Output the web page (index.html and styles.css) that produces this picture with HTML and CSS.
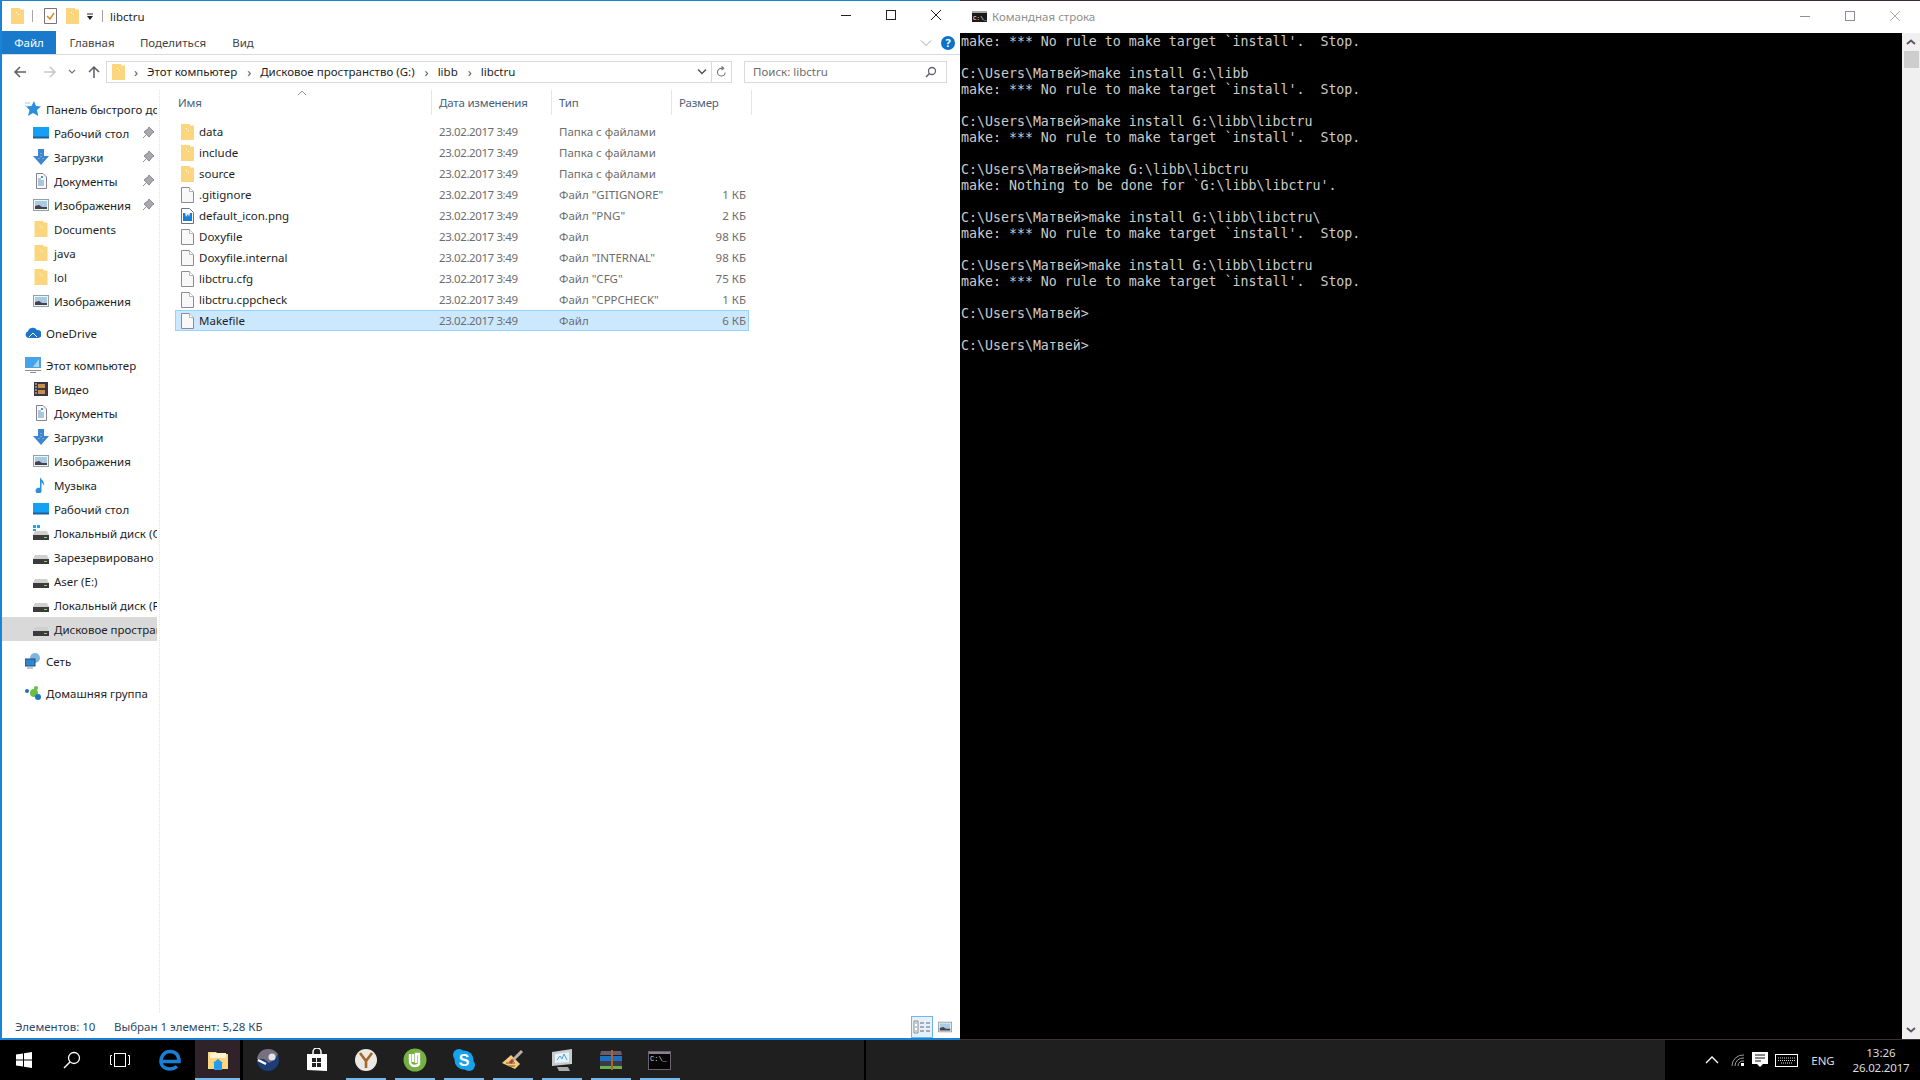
FILE: index.html
```html
<!DOCTYPE html>
<html lang="ru">

<head>
    <meta charset="UTF-8">
    <title>libctru</title>
    <link rel="stylesheet" href="styles.css">
</head>

<body>
    <!-- shared icons -->
    <svg class="sprite" xmlns="http://www.w3.org/2000/svg">
        <symbol id="folder" viewBox="0 0 13 16">
            <path d="M0 0H9V1.5H13V16H0Z" fill="#fbd67f" />
            <path d="M5 4h1v1H5zM7 6h1v1H7z" fill="#fff" />
        </symbol>
        <symbol id="file" viewBox="0 0 13 16">
            <path d="M.5.5H8.5L12.5 4.5V15.5H.5Z" fill="#f8f8f8" stroke="#8d8a96" />
            <path d="M8.5.5V4.5H12.5" fill="#fff" stroke="#b5b3bb" />
        </symbol>
        <symbol id="picfile" viewBox="0 0 13 16">
            <path d="M.5.5H8.5L12.5 4.5V15.5H.5Z" fill="#fff" stroke="#6f7080" />
            <rect x="2" y="5" width="9" height="8" fill="#1a7ed6" />
            <path d="M4 5l1 4 2-3 1 3 1-4z" fill="#e8f4ff" />
        </symbol>
        <symbol id="star" viewBox="0 0 16 16">
            <path d="M9 0l2 5 5 .5-4 3.500 1.300 6L8 12l-5 3 1.500-6L1 5.500 6.500 5z" fill="#2b8fe0" />
            <path d="M0 2h5M0 5h3" stroke="#9bcdf3" />
        </symbol>
        <symbol id="desk" viewBox="0 0 16 16">
            <rect x="0" y="2" width="16" height="11" fill="#15a0f3" />
            <path d="M0 12.500h16" stroke="#1f5f99" stroke-width="2" />
        </symbol>
        <symbol id="down" viewBox="0 0 16 16">
            <path d="M5 0h6v7h5l-8 9-8-9h5z" fill="#3d86cf" />
            <path d="M8 4v1M8 7v1M6 9v1M10 9v1" stroke="#a9cdf0" />
        </symbol>
        <symbol id="docs" viewBox="0 0 16 16">
            <path d="M3.500.5H10L13.500 4V15.500H3.500Z" fill="#fbfbfb" stroke="#85828e" />
            <path d="M5 6h3M5 8h6M5 10h6M5 12h6" stroke="#5a8fbf" />
            <path d="M8 3h2v2H8z" fill="#3f8fd5" />
        </symbol>
        <symbol id="pics" viewBox="0 0 16 16">
            <rect x=".5" y="2.500" width="15" height="11" fill="#eef3f5" stroke="#90a2a0" />
            <rect x="2" y="4" width="12" height="8" fill="#a9cce6" />
            <path d="M2 12V9l4-1 3 2 5 0v2z" fill="#4a3f4c" />
        </symbol>
        <symbol id="pin" viewBox="0 0 16 16">
            <path d="M9 2l5 5-2 1-2 3-1 1-5-5 1-1 3-2zM6 10l-3 3" fill="#a9a9ad" stroke="#8a8a90" />
        </symbol>
        <symbol id="cloud" viewBox="0 0 16 16">
            <path d="M4 13a3.500 3.500 0 0 1-1-6.800A5 5 0 0 1 12 5a3.500 3.500 0 0 1 1 8z" fill="#1d74c6" />
            <path d="M4 12l4-4 4 4" stroke="#fff" fill="none" />
        </symbol>
        <symbol id="comp" viewBox="0 0 16 16">
            <rect x="0" y="0" width="16" height="11" fill="#47a3e8" />
            <path d="M8 10l6-8v8z" fill="#a7d4f3" />
            <path d="M0 13.500h16M5 15.500h6" stroke="#8b8b92" />
        </symbol>
        <symbol id="film" viewBox="0 0 16 16">
            <rect x="1" y="1" width="14" height="14" fill="#3a3540" />
            <path d="M5 3h7v4H5zM5 9h7v4H5z" fill="#c78f4f" />
            <path d="M2 3h2M2 6h2M2 9h2M2 12h2" stroke="#ddd" />
        </symbol>
        <symbol id="music" viewBox="0 0 16 16">
            <path d="M7 0c1 3 5 4 4 9-.3-2-1.500-3-2.500-3.500V13a3 3 0 1 1-1.500-2z" fill="#2a90e0" />
        </symbol>
        <symbol id="disk" viewBox="0 0 16 16">
            <path d="M2 6h12l2 4v5H0v-5z" fill="#cfd0ce" />
            <rect x="0" y="10" width="16" height="5" fill="#3c3a3e" />
            <rect x="11" y="12" width="3" height="1" fill="#86d36a" />
        </symbol>
        <symbol id="sysdisk" viewBox="0 0 16 16">
            <use href="#disk" />
            <path d="M0 0h3v3H0zM4 0h3v3H4zM0 4h3v2H0z" fill="#21a1f1" />
        </symbol>
        <symbol id="net" viewBox="0 0 16 16">
            <circle cx="10" cy="5" r="5" fill="#7fb4dc" />
            <rect x="0" y="6" width="10" height="7" fill="#2f86cf" stroke="#1d4f7c" />
            <path d="M2 15h6" stroke="#8b8b92" />
        </symbol>
        <symbol id="home" viewBox="0 0 16 16">
            <circle cx="2" cy="6" r="2" fill="#1d6fb8" />
            <circle cx="11" cy="3" r="2" fill="#6dbb45" />
            <circle cx="9" cy="8" r="4" fill="#6dbb45" />
            <circle cx="13" cy="12" r="3" fill="#1d74c6" />
        </symbol>
    </svg>

    <div class="desktop">
        <main class="explorer">
            <div class="titlebar">
                <svg class="qa-icon"><use href="#folder" /></svg>
                <span class="qa-sep"></span>
                <svg class="qa-check" viewBox="0 0 13 16">
                    <path d="M.5.5H12.500V15.500H.5Z" fill="#fff" stroke="#77727e" />
                    <path d="M3 8l3 3 4-6" fill="none" stroke="#d98a2b" stroke-width="1.500" />
                </svg>
                <svg class="qa-icon"><use href="#folder" /></svg>
                <svg class="qa-drop" viewBox="0 0 8 8">
                    <path d="M1 1h6" stroke="#222" />
                    <path d="M1 3h6L4 7z" fill="#222" />
                </svg>
                <span class="qa-sep"></span>
                <span class="win-title">libctru</span>
                <div class="win-btns">
                    <svg class="win-btn" viewBox="0 0 10 10"><path d="M0 5.500h10" stroke="#222" /></svg>
                    <svg class="win-btn" viewBox="0 0 10 10"><rect x=".5" y=".5" width="9" height="9" fill="none" stroke="#222" /></svg>
                    <svg class="win-btn" viewBox="0 0 10 10"><path d="M0 0l10 10M10 0L0 10" stroke="#222" /></svg>
                </div>
            </div>

            <div class="ribbon">
                <a class="tab tab-file">Файл</a>
                <a class="tab tab-home">Главная</a>
                <a class="tab tab-share">Поделиться</a>
                <a class="tab tab-view">Вид</a>
                <svg class="rib-chev" viewBox="0 0 12 8"><path d="M1 1.500l5 5 5-5" fill="none" stroke="#a5a5a8" /></svg>
                <span class="help">?</span>
            </div>

            <div class="addr-row">
                <svg class="nav-btn nav-back" viewBox="0 0 14 14"><path d="M13 7H2M7 2L2 7l5 5" fill="none" stroke="#5f5f66" stroke-width="1.500" /></svg>
                <svg class="nav-btn nav-fwd" viewBox="0 0 14 14"><path d="M1 7h11M7 2l5 5-5 5" fill="none" stroke="#c6c6c8" stroke-width="1.500" /></svg>
                <svg class="nav-drop" viewBox="0 0 8 6"><path d="M1 1l3 3 3-3" fill="none" stroke="#77727e" stroke-width="1.200" /></svg>
                <svg class="nav-btn nav-up" viewBox="0 0 14 14"><path d="M7 13V2M2 7l5-5 5 5" fill="none" stroke="#5f5a66" stroke-width="1.500" /></svg>
                <div class="addr-box">
                    <svg class="crumb-icon"><use href="#folder" /></svg>
                    <span class="crumb-sep">›</span>
                    <span class="crumb">Этот компьютер</span>
                    <span class="crumb-sep">›</span>
                    <span class="crumb">Дисковое пространство (G:)</span>
                    <span class="crumb-sep">›</span>
                    <span class="crumb">libb</span>
                    <span class="crumb-sep">›</span>
                    <span class="crumb">libctru</span>
                    <svg class="addr-chev" viewBox="0 0 10 8"><path d="M1 1.500l4 4 4-4" fill="none" stroke="#55505a" stroke-width="1.500" /></svg>
                    <svg class="addr-refresh" viewBox="0 0 12 12"><path d="M10 6.500A4.200 4.200 0 1 1 6 2h2M6 0l2.500 2L6 4" fill="none" stroke="#77727e" stroke-width="1.200" /></svg>
                </div>
                <div class="search-box">
                    <span>Поиск: libctru</span>
                    <svg class="search-icon" viewBox="0 0 12 12"><circle cx="7" cy="5" r="3.500" fill="none" stroke="#66616c" stroke-width="1.300" /><path d="M4.500 7.500L1 11" stroke="#66616c" stroke-width="1.600" /></svg>
                </div>
            </div>

            <div class="panes">
                <nav class="navpane">
                    <div class="nav-group">
                        <div class="nav-row top"><svg class="ico"><use href="#star" /></svg><span>Панель быстрого доступа</span></div>
                        <div class="nav-row"><svg class="ico"><use href="#desk" /></svg><span>Рабочий стол</span><svg class="pin"><use href="#pin" /></svg></div>
                        <div class="nav-row"><svg class="ico"><use href="#down" /></svg><span>Загрузки</span><svg class="pin"><use href="#pin" /></svg></div>
                        <div class="nav-row"><svg class="ico"><use href="#docs" /></svg><span>Документы</span><svg class="pin"><use href="#pin" /></svg></div>
                        <div class="nav-row"><svg class="ico"><use href="#pics" /></svg><span>Изображения</span><svg class="pin"><use href="#pin" /></svg></div>
                        <div class="nav-row"><svg class="ico"><use href="#folder" /></svg><span>Documents</span></div>
                        <div class="nav-row"><svg class="ico"><use href="#folder" /></svg><span>java</span></div>
                        <div class="nav-row"><svg class="ico"><use href="#folder" /></svg><span>lol</span></div>
                        <div class="nav-row"><svg class="ico"><use href="#pics" /></svg><span>Изображения</span></div>
                    </div>
                    <div class="nav-group">
                        <div class="nav-row top"><svg class="ico"><use href="#cloud" /></svg><span>OneDrive</span></div>
                    </div>
                    <div class="nav-group">
                        <div class="nav-row top"><svg class="ico"><use href="#comp" /></svg><span>Этот компьютер</span></div>
                        <div class="nav-row"><svg class="ico"><use href="#film" /></svg><span>Видео</span></div>
                        <div class="nav-row"><svg class="ico"><use href="#docs" /></svg><span>Документы</span></div>
                        <div class="nav-row"><svg class="ico"><use href="#down" /></svg><span>Загрузки</span></div>
                        <div class="nav-row"><svg class="ico"><use href="#pics" /></svg><span>Изображения</span></div>
                        <div class="nav-row"><svg class="ico"><use href="#music" /></svg><span>Музыка</span></div>
                        <div class="nav-row"><svg class="ico"><use href="#desk" /></svg><span>Рабочий стол</span></div>
                        <div class="nav-row"><svg class="ico"><use href="#sysdisk" /></svg><span>Локальный диск (C:)</span></div>
                        <div class="nav-row"><svg class="ico"><use href="#disk" /></svg><span>Зарезервировано системой</span></div>
                        <div class="nav-row"><svg class="ico"><use href="#disk" /></svg><span>Aser (E:)</span></div>
                        <div class="nav-row"><svg class="ico"><use href="#disk" /></svg><span>Локальный диск (F:)</span></div>
                        <div class="nav-row current"><svg class="ico"><use href="#disk" /></svg><span>Дисковое пространство</span></div>
                    </div>
                    <div class="nav-group">
                        <div class="nav-row top"><svg class="ico"><use href="#net" /></svg><span>Сеть</span></div>
                    </div>
                    <div class="nav-group">
                        <div class="nav-row top"><svg class="ico"><use href="#home" /></svg><span>Домашняя группа</span></div>
                    </div>
                </nav>

                <section class="files">
                    <div class="file-head">
                        <svg class="sort-caret" viewBox="0 0 10 6"><path d="M1 5l4-4 4 4" fill="none" stroke="#9a9a9e" /></svg>
                        <div>Имя</div>
                        <div>Дата изменения</div>
                        <div>Тип</div>
                        <div>Размер</div>
                    </div>
                    <div class="file-row"><div class="fname"><svg class="fico"><use href="#folder" /></svg>data</div><div class="fdate">23.02.2017 3:49</div><div>Папка с файлами</div><div class="fsize"></div></div>
                    <div class="file-row"><div class="fname"><svg class="fico"><use href="#folder" /></svg>include</div><div class="fdate">23.02.2017 3:49</div><div>Папка с файлами</div><div class="fsize"></div></div>
                    <div class="file-row"><div class="fname"><svg class="fico"><use href="#folder" /></svg>source</div><div class="fdate">23.02.2017 3:49</div><div>Папка с файлами</div><div class="fsize"></div></div>
                    <div class="file-row"><div class="fname"><svg class="fico"><use href="#file" /></svg>.gitignore</div><div class="fdate">23.02.2017 3:49</div><div>Файл "GITIGNORE"</div><div class="fsize">1 КБ</div></div>
                    <div class="file-row"><div class="fname"><svg class="fico"><use href="#picfile" /></svg>default_icon.png</div><div class="fdate">23.02.2017 3:49</div><div>Файл "PNG"</div><div class="fsize">2 КБ</div></div>
                    <div class="file-row"><div class="fname"><svg class="fico"><use href="#file" /></svg>Doxyfile</div><div class="fdate">23.02.2017 3:49</div><div>Файл</div><div class="fsize">98 КБ</div></div>
                    <div class="file-row"><div class="fname"><svg class="fico"><use href="#file" /></svg>Doxyfile.internal</div><div class="fdate">23.02.2017 3:49</div><div>Файл "INTERNAL"</div><div class="fsize">98 КБ</div></div>
                    <div class="file-row"><div class="fname"><svg class="fico"><use href="#file" /></svg>libctru.cfg</div><div class="fdate">23.02.2017 3:49</div><div>Файл "CFG"</div><div class="fsize">75 КБ</div></div>
                    <div class="file-row"><div class="fname"><svg class="fico"><use href="#file" /></svg>libctru.cppcheck</div><div class="fdate">23.02.2017 3:49</div><div>Файл "CPPCHECK"</div><div class="fsize">1 КБ</div></div>
                    <div class="file-row selected"><div class="fname"><svg class="fico"><use href="#file" /></svg>Makefile</div><div class="fdate">23.02.2017 3:49</div><div>Файл</div><div class="fsize">6 КБ</div></div>
                </section>
            </div>

            <div class="statusbar">
                <span class="st-count">Элементов: 10</span>
                <span class="st-sel">Выбран 1 элемент: 5,28 КБ</span>
                <div class="view-btns">
                    <span class="view-btn active">
                        <svg viewBox="0 0 18 16" width="18" height="16">
                            <path d="M1 2h4v12H1z" fill="#fff" stroke="#8a8a8a" />
                            <path d="M2.500 3.500h1v1h-1zM2.500 7.500h1v1h-1zM2.500 11.500h1v1h-1z" fill="#333" />
                            <path d="M7 4h4M13 4h4M7 8h4M13 8h4M7 12h4M13 12h4" stroke="#66607a" />
                        </svg>
                    </span>
                    <span class="view-btn">
                        <svg width="14" height="14"><use href="#pics" /></svg>
                    </span>
                </div>
            </div>
        </main>

        <section class="console">
            <div class="con-title">
                <svg class="con-icon" viewBox="0 0 15 11">
                    <rect width="15" height="11" fill="#1a1a1a" />
                    <rect y="0" width="15" height="2" fill="#aaa" />
                    <text x="1" y="9" class="con-icon-text">C:\_</text>
                </svg>
                <span class="con-name">Командная строка</span>
                <div class="win-btns con-btns">
                    <svg class="win-btn" viewBox="0 0 10 10"><path d="M0 5.500h10" stroke="#9a8a9a" /></svg>
                    <svg class="win-btn" viewBox="0 0 10 10"><rect x=".5" y=".5" width="9" height="9" fill="none" stroke="#9a8a9a" /></svg>
                    <svg class="win-btn" viewBox="0 0 10 10"><path d="M0 0l10 10M10 0L0 10" stroke="#a3b0a3" /></svg>
                </div>
            </div>
            <div class="con-main">
<pre class="con-text">make: *** No rule to make target `install'.  Stop.

C:\Users\Матвей&gt;make install G:\libb
make: *** No rule to make target `install'.  Stop.

C:\Users\Матвей&gt;make install G:\libb\libctru
make: *** No rule to make target `install'.  Stop.

C:\Users\Матвей&gt;make G:\libb\libctru
make: Nothing to be done for `G:\libb\libctru'.

C:\Users\Матвей&gt;make install G:\libb\libctru\
make: *** No rule to make target `install'.  Stop.

C:\Users\Матвей&gt;make install G:\libb\libctru
make: *** No rule to make target `install'.  Stop.

C:\Users\Матвей&gt;

C:\Users\Матвей&gt;</pre>
                <div class="con-scroll">
                    <svg class="sc-arrow" viewBox="0 0 10 6"><path d="M1 5l4-3.500L9 5" fill="none" stroke="#5f5668" stroke-width="2" /></svg>
                    <div class="sc-thumb"></div>
                    <svg class="sc-arrow sc-down" viewBox="0 0 10 6"><path d="M1 1l4 3.500L9 1" fill="none" stroke="#5f5668" stroke-width="2" /></svg>
                </div>
            </div>
        </section>
    </div>

    <footer class="taskbar">
        <div class="tb-left">
            <span class="tb-cell tb-start">
                <svg width="16" height="16" viewBox="0 0 16 16"><path d="M0 2.500l7-1v6H0zM8 1.300L16 0v7.500H8zM0 8.500h7v6l-7-1zM8 8.500h8V16l-8-1.300z" fill="#fff" /></svg>
            </span>
            <span class="tb-cell tb-search">
                <svg width="18" height="18" viewBox="0 0 18 18"><circle cx="11" cy="7" r="5.500" fill="none" stroke="#fff" stroke-width="1.300" /><path d="M7 11l-6 6" stroke="#fff" stroke-width="1.500" /></svg>
            </span>
            <span class="tb-cell tb-tasks">
                <svg width="20" height="14" viewBox="0 0 20 14"><rect x="4.500" y=".5" width="11" height="13" fill="none" stroke="#fff" /><path d="M2 2.500H.5v9H2M18 2.500h1.500v9H18" fill="none" stroke="#fff" /></svg>
            </span>
            <span class="tb-cell tb-edge">
                <svg width="22" height="22" viewBox="0 0 22 22"><path d="M3 12.500H20C20 6 16.500 2.500 11 2.500S2 7 2 12c0 5 4 8 9 8 3 0 5-.8 7-2.500" fill="none" stroke="#1a7fd4" stroke-width="3.600" /></svg>
            </span>
        </div>
        <span class="tb-cell tb-active">
            <svg width="22" height="19" viewBox="0 0 22 19">
                <path d="M1 1h8l2 2h10v15H1z" fill="#fbd67f" />
                <path d="M3 2h16v5H3z" fill="#fdf3d0" />
                <path d="M6 12l5-4 5 4h-1v7H7v-7z" fill="#2a9bea" />
            </svg>
        </span>
        <div class="tb-apps">
            <span class="tb-app">
                <svg width="22" height="22" viewBox="0 0 22 22">
                    <circle cx="11" cy="11" r="11" fill="#1c3d78" />
                    <path d="M0 10h7l5 4 6-4 3-5C18 1 14 0 11 0 5 0 1 4 0 10z" fill="#7a6f7d" />
                    <circle cx="15" cy="8" r="3.500" fill="#dfe3ea" />
                    <path d="M1 11l8 4" stroke="#fff" stroke-width="2.500" />
                </svg>
            </span>
            <span class="tb-app">
                <svg width="22" height="24" viewBox="0 0 22 24">
                    <path d="M7 7V4a4 4 0 0 1 8 0v3" fill="none" stroke="#fff" stroke-width="1.500" />
                    <path d="M1 6h20v17l-20-1z" fill="#fff" />
                    <path d="M6 10h4v4H6zM11 10h4v4h-4zM6 15h4v4H6zM11 15h4v4h-4z" fill="#222" />
                </svg>
            </span>
            <span class="tb-app on">
                <svg width="24" height="24" viewBox="0 0 24 24">
                    <circle cx="12" cy="12" r="11" fill="#ece9e4" />
                    <path d="M6 5l6 8 6-8M12 13v7" fill="none" stroke="#a5662c" stroke-width="2.600" />
                </svg>
            </span>
            <span class="tb-app on">
                <svg width="24" height="24" viewBox="0 0 24 24">
                    <circle cx="12" cy="12" r="11.500" fill="#76b043" />
                    <path d="M7 6v8c0 3 3 4 5 4 1.500 0 3-.5 4-2V6h-3v9M10 6v8" fill="none" stroke="#fff" stroke-width="2.400" />
                </svg>
            </span>
            <span class="tb-app on">
                <svg width="24" height="24" viewBox="0 0 24 24">
                    <circle cx="7" cy="7" r="6" fill="#15a3ee" />
                    <circle cx="17" cy="17" r="6" fill="#15a3ee" />
                    <circle cx="12" cy="12" r="9.500" fill="#15a3ee" />
                    <text x="12" y="18" class="skype-s">S</text>
                </svg>
            </span>
            <span class="tb-app on">
                <svg width="22" height="22" viewBox="0 0 22 22">
                    <path d="M0 14l9-8 9 9-5 5z" fill="#f2cd7e" />
                    <path d="M4 14h9M6 17h7" stroke="#7a5a2a" />
                    <path d="M9 13L20 2" stroke="#b8b2a6" stroke-width="3" />
                    <path d="M8 14l3-3" stroke="#c0392b" stroke-width="3" />
                </svg>
            </span>
            <span class="tb-app on">
                <svg width="24" height="24" viewBox="0 0 24 24">
                    <path d="M2 4l20-3v15L2 18z" fill="#c9cccc" />
                    <path d="M5 6l14-2v10L5 15z" fill="#e6f3fa" />
                    <path d="M7 12l3-4 2 3 2-5 3 6" fill="none" stroke="#4aa0dd" />
                    <path d="M7 19h11l2 4H9z" fill="#a9abab" />
                </svg>
            </span>
            <span class="tb-app on">
                <svg width="24" height="22" viewBox="0 0 24 22">
                    <path d="M2 2h20l1 4H1z" fill="#6a5a72" />
                    <path d="M1 7h22v5H1z" fill="#1f6fc0" />
                    <path d="M1 12h22v5H1z" fill="#3a3a46" />
                    <path d="M1 17h22v3H1z" fill="#69b04a" />
                    <path d="M13 1v20" stroke="#a9662a" stroke-width="2" />
                </svg>
            </span>
            <span class="tb-app on">
                <svg width="23" height="19" viewBox="0 0 23 19">
                    <rect x=".5" y=".5" width="22" height="18" fill="#050505" stroke="#6d6070" />
                    <rect x="1" y="1" width="21" height="2" fill="#8c8090" />
                    <text x="2" y="10" class="cmd-text">C:\_</text>
                </svg>
            </span>
        </div>
        <div class="tb-div"></div>
        <div class="tb-empty"></div>
        <div class="tray">
            <svg class="tr-arrow" viewBox="0 0 14 8"><path d="M1 7l6-6 6 6" fill="none" stroke="#fff" stroke-width="1.300" /></svg>
            <svg class="tr-wifi" viewBox="0 0 14 14"><path d="M1 13A11 11 0 0 1 13 2M4 13a8 8 0 0 1 9-8M7 13a5 5 0 0 1 6-5" fill="none" stroke="#9d9d9d" /><path d="M10 10h3v3h-3z" fill="#fff" /></svg>
            <svg class="tr-chat" viewBox="0 0 16 16"><path d="M0 0h16v12h-5l-3 3-3-3H0z" fill="#fff" /><path d="M3 3h10M3 6h10M3 9h6" stroke="#111" /></svg>
            <svg class="tr-kb" viewBox="0 0 23 13"><rect x=".5" y=".5" width="22" height="12" fill="none" stroke="#fff" /><path d="M3 4h17M3 6.500h17M6 9h11" stroke="#ddd" stroke-dasharray="1 1" /></svg>
            <span class="tr-lang">ENG</span>
            <div class="tr-clock">
                <span>13:26</span>
                <span class="tr-date">26.02.2017</span>
            </div>
        </div>
    </footer>
</body>

</html>
```

FILE: styles.css
```css
* {
    box-sizing: border-box;
}

html,
body {
    margin: 0;
    padding: 0;
}

body {
    width: 1920px;
    height: 1080px;
    overflow: hidden;
    display: flex;
    flex-direction: column;
    font-family: "Noto Sans", "Open Sans", sans-serif;
    font-size: 11.5px;
    color: #1e1e1e;
    background-color: #000;
}

.sprite {
    display: none;
}

.desktop {
    display: flex;
    height: 1040px;
}

/* explorer window */

.explorer {
    width: 960px;
    display: flex;
    flex-direction: column;
    background-color: #fff;
    border: 1px solid #1883d7;
    border-left-width: 2px;
    border-right: none;
    border-bottom-width: 2px;
}

.titlebar {
    height: 30px;
    display: flex;
    align-items: center;
    padding-left: 9px;
    flex: none;
}

.qa-icon {
    width: 13px;
    height: 16px;
}

.qa-sep {
    width: 1px;
    height: 12px;
    background-color: #a5a5a5;
    margin: 0 8px;
}

.qa-check {
    width: 13px;
    height: 16px;
    margin: 0 9px 0 3px;
}

.qa-drop {
    width: 8px;
    height: 8px;
    margin: 2px 0 0 7px;
}

.win-title {
    margin-left: -1px;
    color: #1e1e1e;
}

.win-btns {
    margin-left: auto;
    display: flex;
    align-items: center;
    gap: 35px;
    padding: 0 19px 2px 0;
}

.win-btn {
    width: 10px;
    height: 10px;
    display: block;
}

.ribbon {
    height: 24px;
    display: flex;
    align-items: center;
    border-bottom: 1px solid #dadbdc;
    flex: none;
    color: #444;
}

.tab {
    display: block;
    text-align: center;
}

.tab-file {
    width: 54px;
    height: 23px;
    line-height: 23px;
    background-color: #1979ca;
    color: #fff;
}

.tab-home {
    width: 70px;
    margin-left: 1px;
}

.tab-share {
    width: 92px;
}

.tab-view {
    width: 46px;
    margin-left: 1px;
}

.rib-chev {
    width: 12px;
    height: 8px;
    margin-left: auto;
    margin-right: 9px;
}

.help {
    width: 14px;
    height: 14px;
    border-radius: 50%;
    background-color: #0b73c7;
    color: #fff;
    font-size: 11px;
    font-weight: bold;
    line-height: 14px;
    text-align: center;
    margin-right: 5px;
}

.addr-row {
    height: 35px;
    padding-bottom: 2px;
    display: flex;
    align-items: center;
    flex: none;
}

.nav-btn {
    width: 14px;
    height: 14px;
}

.nav-back {
    margin-left: 11px;
}

.nav-fwd {
    margin-left: 16px;
}

.nav-drop {
    width: 8px;
    height: 6px;
    margin-left: 11px;
}

.nav-up {
    margin-left: 11px;
}

.addr-box {
    width: 626px;
    height: 22px;
    margin-left: 5px;
    border: 1px solid #d9d9d9;
    display: flex;
    align-items: center;
    padding-left: 5px;
    color: #1e1e1e;
}

.crumb-icon {
    width: 13px;
    height: 16px;
    margin-right: 5px;
}

.crumb-sep {
    width: 12px;
    text-align: center;
    color: #55505a;
    margin-right: 5px;
    font-size: 13px;
    line-height: 14px;
}

.crumb {
    margin-right: 6px;
}

.addr-chev {
    width: 10px;
    height: 8px;
    margin-left: auto;
    margin-right: 4px;
}

.addr-refresh {
    width: 20px;
    height: 20px;
    padding: 4px;
    border-left: 1px solid #d9d9d9;
}

.search-box {
    width: 203px;
    height: 22px;
    margin-left: 12px;
    border: 1px solid #d9d9d9;
    display: flex;
    align-items: center;
    justify-content: space-between;
    padding: 0 9px 0 8px;
    color: #6d6d6d;
}

.search-icon {
    width: 12px;
    height: 12px;
}

.panes {
    flex: 1;
    display: flex;
    min-height: 0;
}

/* navigation pane */

.navpane {
    width: 173px;
    flex: none;
    padding: 7px 0 0;
    background-image: linear-gradient(#e2e2e2 50%, transparent 50%);
    background-size: 1px 2px;
    background-repeat: repeat-y;
    background-position: 157px 0;
}

.nav-group {
    width: 155px;
    margin-bottom: 8px;
}

.nav-row {
    height: 24px;
    display: flex;
    align-items: center;
    padding-left: 31px;
    overflow: hidden;
    white-space: nowrap;
    position: relative;
}

.nav-row.top {
    padding-left: 23px;
}

.nav-row.current {
    background-color: #d9d9d9;
}

.ico {
    width: 16px;
    height: 16px;
    flex: none;
    margin-right: 5px;
}

.pin {
    width: 16px;
    height: 16px;
    position: absolute;
    right: 1px;
    top: 4px;
}

/* file list */

.files {
    flex: 1;
    position: relative;
}

.file-head,
.file-row {
    display: grid;
    grid-template-columns: 257px 120px 120px 77px;
    align-items: center;
    white-space: nowrap;
}

.file-head {
    width: 577px;
    grid-template-columns: 257px 120px 120px 80px;
    height: 25px;
    margin-bottom: 6px;
    color: #4c607a;
    letter-spacing: -0.2px;
}

.file-head > div {
    height: 25px;
    line-height: 25px;
    padding-left: 7px;
    border-right: 1px solid #e5e5e5;
}

.file-head > div:first-of-type {
    padding-left: 3px;
}

.sort-caret {
    position: absolute;
    left: 122px;
    top: 0;
    width: 10px;
    height: 6px;
}

.file-row {
    width: 574px;
    height: 21px;
    color: #6d6d6d;
    border: 1px solid transparent;
}

.file-row > div {
    padding-left: 6px;
}

.file-row > .fname {
    display: flex;
    align-items: center;
    color: #1e1e1e;
    padding-left: 5px;
}

.file-row > .fdate {
    letter-spacing: -0.4px;
}

.fico {
    width: 13px;
    height: 16px;
    margin-right: 5px;
    flex: none;
}

.file-row > .fsize {
    text-align: right;
    padding: 0 4px 0 0;
}

.selected {
    background-color: #cce8ff;
    border-color: #99d1ff;
}

/* status bar */

.statusbar {
    height: 25px;
    padding-top: 2px;
    flex: none;
    display: flex;
    align-items: center;
    color: #2b4a6a;
}

.st-count {
    margin-left: 13px;
    width: 99px;
}

.view-btns {
    margin-left: auto;
    display: flex;
    gap: 1px;
    padding-right: 4px;
    align-items: center;
}

.view-btn {
    width: 22px;
    height: 22px;
    display: flex;
    align-items: center;
    justify-content: center;
}

.view-btn.active {
    background-color: #e4f1fb;
    border: 1px solid #6fb6ea;
}

/* console window */

.console {
    width: 960px;
    display: flex;
    flex-direction: column;
    background-color: #000;
    border-top: 1px solid #3a2b3a;
    border-bottom: 1px solid #3a3238;
}

.con-title {
    height: 32px;
    flex: none;
    display: flex;
    align-items: center;
    background-color: #fff;
    padding: 0 0 1px 12px;
}

.con-icon {
    width: 15px;
    height: 11px;
    margin-right: 5px;
}

.con-icon-text {
    font-family: "Liberation Mono", monospace;
    font-size: 6px;
    fill: #fff;
}

.con-name {
    color: #8f8f8f;
}

.con-btns {
    gap: 35px;
    padding: 0 20px 2px 0;
}

.con-main {
    flex: 1;
    display: flex;
    min-height: 0;
}

.con-text {
    flex: 1;
    margin: 0;
    padding: 1px 0 0 1px;
    font-family: "DejaVu Sans Mono", "Liberation Mono", monospace;
    font-size: 13.28px;
    line-height: 16px;
    color: #ccc;
    overflow: hidden;
}

.con-scroll {
    width: 18px;
    flex: none;
    background-color: #f0f0f0;
    display: flex;
    flex-direction: column;
    align-items: center;
    padding-top: 6px;
}

.sc-arrow {
    width: 10px;
    height: 6px;
    flex: none;
}

.sc-thumb {
    width: 15px;
    height: 17px;
    margin-top: 6px;
    background-color: #cdcdcd;
}

.sc-down {
    margin-top: auto;
    margin-bottom: 6px;
}

/* taskbar */

.taskbar {
    height: 40px;
    flex: none;
    display: flex;
    background-color: #000;
    color: #fff;
}

.tb-left {
    width: 195px;
    display: flex;
    flex: none;
}

.tb-cell {
    display: flex;
    align-items: center;
    justify-content: center;
    flex: none;
    height: 40px;
}

.tb-start,
.tb-search,
.tb-tasks {
    width: 48px;
}

.tb-edge {
    width: 48px;
    margin-left: 2px;
}

.tb-active {
    width: 45px;
    margin-right: 3px;
    background-color: #2f2229;
    background-image: linear-gradient(#76b9ed, #76b9ed);
    background-size: 100% 2px;
    background-position: center bottom;
    background-repeat: no-repeat;
}

.tb-apps {
    width: 621px;
    flex: none;
    display: flex;
    background-color: #1f1f1f;
}

.tb-app {
    width: 49px;
    height: 40px;
    flex: none;
    display: flex;
    align-items: center;
    justify-content: center;
}

.tb-app.on {
    background-image: linear-gradient(#76b9ed, #76b9ed);
    background-size: 40px 2px;
    background-position: center bottom;
    background-repeat: no-repeat;
}

.skype-s {
    font-family: "Liberation Sans", sans-serif;
    font-size: 16px;
    font-weight: bold;
    fill: #fff;
    text-anchor: middle;
}

.cmd-text {
    font-family: "Liberation Mono", monospace;
    font-size: 7px;
    fill: #ddd;
}

.tb-div {
    width: 2px;
    flex: none;
    background-color: #000;
}

.tb-empty {
    width: 799px;
    flex: none;
    background-color: #1f1f1f;
}

.tray {
    flex: 1;
    display: flex;
    align-items: center;
    padding-left: 40px;
}

.tr-arrow {
    width: 14px;
    height: 8px;
}

.tr-wifi {
    width: 14px;
    height: 14px;
    margin-left: 12px;
}

.tr-chat {
    width: 16px;
    height: 16px;
    margin-left: 7px;
}

.tr-kb {
    width: 23px;
    height: 13px;
    margin-left: 7px;
}

.tr-lang {
    margin-left: 10px;
    width: 30px;
    text-align: center;
    color: #ddd;
}

.tr-clock {
    width: 70px;
    margin-left: 8px;
    display: flex;
    flex-direction: column;
    align-items: center;
    line-height: 15px;
    color: #ddd;
}

.tr-date {
    letter-spacing: -0.2px;
}
```
